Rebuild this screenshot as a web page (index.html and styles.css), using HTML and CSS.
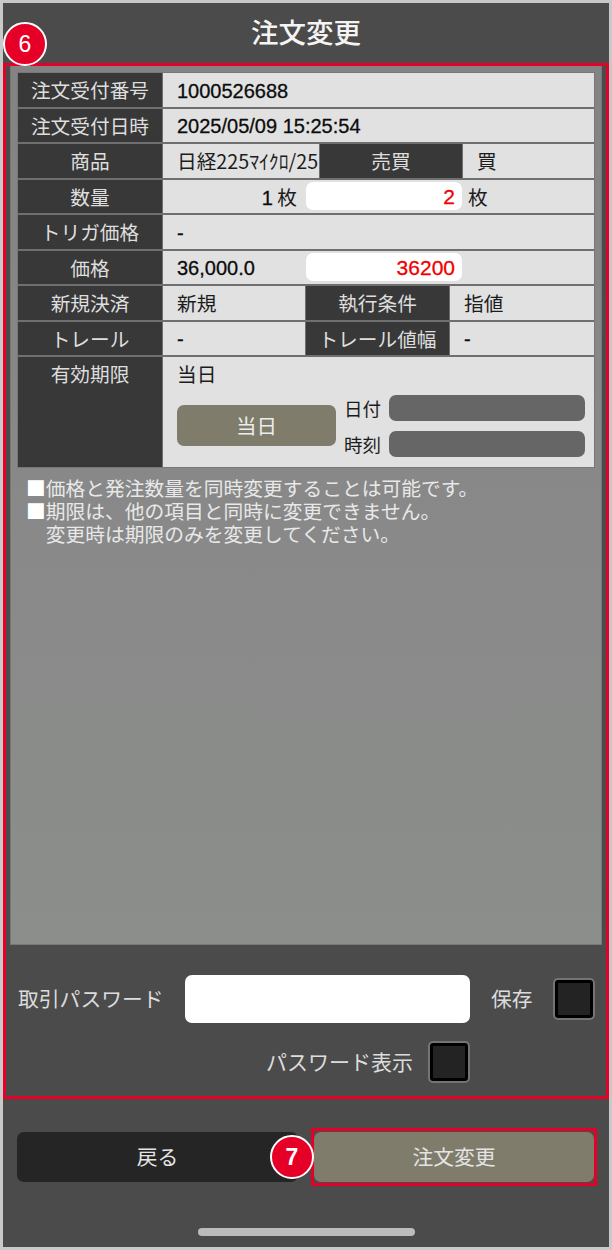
FILE: index.html
```html
<!DOCTYPE html>
<html lang="ja">
<head>
<meta charset="utf-8">
<title>注文変更</title>
<link rel="stylesheet" href="styles.css">
</head>
<body>
<div class="phone">
  <header class="title">注文変更</header>
  <span class="badge badge-six">6</span>
  <main class="frame">
    <section class="panel">
      <div class="table">
        <div class="row"><div class="cell label">注文受付番号</div><div class="cell value num grow">1000526688</div></div>
        <div class="row"><div class="cell label">注文受付日時</div><div class="cell value num grow">2025/05/09 15:25:54</div></div>
        <div class="row"><div class="cell label">商品</div><div class="cell value product">日経225ﾏｲｸﾛ/25</div><div class="cell label side">売買</div><div class="cell value grow">買</div></div>
        <div class="row"><div class="cell label">数量</div><div class="cell value grow flush"><span class="current"><span class="num">1</span> 枚</span><span class="field">2</span><span class="unit">枚</span></div></div>
        <div class="row"><div class="cell label">トリガ価格</div><div class="cell value num grow">-</div></div>
        <div class="row"><div class="cell label">価格</div><div class="cell value grow flush"><span class="current left num">36,000.0</span><span class="field">36200</span></div></div>
        <div class="row"><div class="cell label">新規決済</div><div class="cell value half">新規</div><div class="cell label mid">執行条件</div><div class="cell value grow">指値</div></div>
        <div class="row"><div class="cell label">トレール</div><div class="cell value half num">-</div><div class="cell label mid">トレール値幅</div><div class="cell value num grow">-</div></div>
        <div class="row tall">
          <div class="cell label top">有効期限</div>
          <div class="cell value grow expiry">
            <div class="expiry-text">当日</div>
            <div class="expiry-body">
              <div class="today">当日</div>
              <div class="expiry-fields">
                <div class="expiry-field"><span class="expiry-name">日付</span><span class="disabled"></span></div>
                <div class="expiry-field"><span class="expiry-name">時刻</span><span class="disabled"></span></div>
              </div>
            </div>
          </div>
        </div>
      </div>
      <div class="notes">
        <div class="note"><span class="mark">■</span><span>価格と発注数量を同時変更することは可能です。</span></div>
        <div class="note"><span class="mark">■</span><span>期限は、他の項目と同時に変更できません。<br>変更時は期限のみを変更してください。</span></div>
      </div>
    </section>
    <div class="password-row">
      <span class="password-label">取引パスワード</span>
      <span class="password-input"></span>
      <span class="save-label">保存</span>
      <span class="check"></span>
    </div>
    <div class="show-row">
      <span class="show-label">パスワード表示</span>
      <span class="check"></span>
    </div>
  </main>
  <div class="actions">
    <div class="btn back">戻る</div>
    <div class="submit-frame"><div class="btn submit">注文変更</div></div>
    <span class="badge badge-seven">7</span>
  </div>
  <div class="home-bar"></div>
</div>
</body>
</html>
```
FILE: styles.css
```css
* { box-sizing: border-box; }
html, body { margin: 0; padding: 0; }
body {
  width: 612px;
  height: 1250px;
  overflow: hidden;
  font-family: "Noto Sans CJK JP", sans-serif;
}
.phone {
  position: relative;
  width: 612px;
  height: 1250px;
  border: 3px solid #c9c9c9;
  background: #4b4b4b;
  display: flex;
  flex-direction: column;
}
.title {
  height: 60px;
  padding-bottom: 4px;
  display: flex;
  align-items: center;
  justify-content: center;
  color: #f4f4f4;
  font-size: 27.5px;
  font-weight: 500;
}
.badge {
  position: absolute;
  width: 44px;
  height: 44px;
  border-radius: 50%;
  background: #e60027;
  border: 2px solid #fff;
  color: #fff;
  display: flex;
  align-items: center;
  justify-content: center;
  font-family: "Liberation Sans", sans-serif;
  font-size: 23px;
}
.badge-six { left: 0; top: 19px; }
.badge-seven { left: 267px; top: 7px; font-weight: bold; }
.frame {
  height: 1036px;
  border: 3px solid #e60027;
  display: flex;
  flex-direction: column;
}
.panel {
  height: 879px;
  margin: 0 4px;
  padding: 7px 7px 0;
  background: linear-gradient(#838383, #8c8e8c);
  border: 1px solid #777;
  border-top: 0;
}
.table {
  display: flex;
  flex-direction: column;
  gap: 2px;
  background: #6f6f6f;
  box-shadow: 0 0 0 1px #777;
}
.row {
  display: flex;
  gap: 1px;
  height: 33.5px;
  font-size: 19.7px;
}
.row.tall { height: 110px; }
.cell {
  display: flex;
  align-items: center;
}
.label {
  width: 144px;
  flex: none;
  justify-content: center;
  background: #383838;
  color: #dedede;
}
.label.top { align-items: flex-start; padding-top: 2px; }
.value {
  background: #e1e1e1;
  color: #1c1c1c;
  padding-left: 14px;
}
.grow { flex: 1; min-width: 0; }
.num {
  font-family: "Liberation Sans", sans-serif;
  font-size: 20px;
  color: #0c0c0c;
  -webkit-text-stroke: 0.3px #0c0c0c;
  padding-top: 3px;
}
.product { width: 156px; flex: none; white-space: nowrap; }
.side { width: 142px; }
.half { width: 142px; flex: none; }
.mid { width: 143px; }
.flush { padding-left: 0; }
.current { width: 134px; flex: none; text-align: right; }
.current.left { text-align: left; padding-left: 14px; }
.field {
  width: 156px;
  height: 28px;
  margin-left: 9px;
  padding-right: 7px;
  border-radius: 7px;
  background: #fff;
  color: #f00000;
  font-family: "Liberation Sans", sans-serif;
  font-size: 21px;
  -webkit-text-stroke: 0.3px #f00000;
  text-align: right;
  line-height: 30px;
}
.unit { margin-left: 6px; }
.expiry {
  display: block;
  padding: 0 9px 0 14px;
}
.expiry-text { height: 36px; line-height: 34px; }
.expiry-body {
  display: flex;
  align-items: center;
  gap: 8px;
  margin-top: 2px;
}
.today {
  width: 159px;
  height: 41px;
  margin-bottom: 2px;
  border-radius: 7px;
  background: #7f7c6b;
  color: #ececec;
  display: flex;
  align-items: center;
  justify-content: center;
  font-size: 20.5px;
}
.expiry-fields {
  flex: 1;
  display: flex;
  flex-direction: column;
  gap: 10px;
}
.expiry-field {
  display: flex;
  align-items: center;
  gap: 8px;
  height: 26px;
}
.expiry-name { width: 37px; flex: none; font-size: 18.5px; white-space: nowrap; }
.disabled {
  flex: 1;
  height: 26px;
  border-radius: 7px;
  background: #666;
}
.notes {
  margin-top: 9px;
  padding-left: 8px;
  color: #e8e8e8;
  font-size: 19.75px;
  line-height: 23px;
}
.note { display: flex; }
.mark { flex: none; color: #fff; }
.password-row {
  display: flex;
  align-items: center;
  height: 48px;
  margin-top: 30px;
  padding-left: 12px;
  color: #dcdcdc;
  font-size: 20.8px;
}
.password-label { width: 167px; flex: none; white-space: nowrap; padding-bottom: 3px; }
.password-input {
  width: 285px;
  height: 48px;
  border-radius: 7px;
  background: #fff;
}
.save-label { margin-left: 21px; width: 62px; flex: none; padding-bottom: 2px; }
.check {
  width: 42px;
  height: 42px;
  flex: none;
  border: 2px solid #747474;
  border-radius: 5px;
  background: #232323;
  box-shadow: inset 0 0 0 3px #000;
}
.show-row {
  display: flex;
  justify-content: flex-end;
  align-items: center;
  gap: 15px;
  height: 42px;
  margin-top: 18px;
  padding-right: 136px;
  color: #dcdcdc;
  font-size: 21px;
}
.show-label { padding-bottom: 2px; }
.actions {
  position: relative;
  display: flex;
  align-items: center;
  gap: 13px;
  margin-top: 29px;
  padding-left: 14px;
}
.btn {
  height: 50px;
  padding-bottom: 2px;
  border-radius: 7px;
  display: flex;
  align-items: center;
  justify-content: center;
  color: #e4e4e4;
  font-size: 20.8px;
}
.back { width: 281px; background: #252525; }
.submit-frame {
  border: 3px solid #e60027;
  padding: 1px 0;
}
.submit { width: 280px; background: #7f7c6b; }
.home-bar {
  width: 217px;
  height: 8px;
  margin: 42px 0 0 195px;
  border-radius: 4px;
  background: #bcbcbc;
}
```
